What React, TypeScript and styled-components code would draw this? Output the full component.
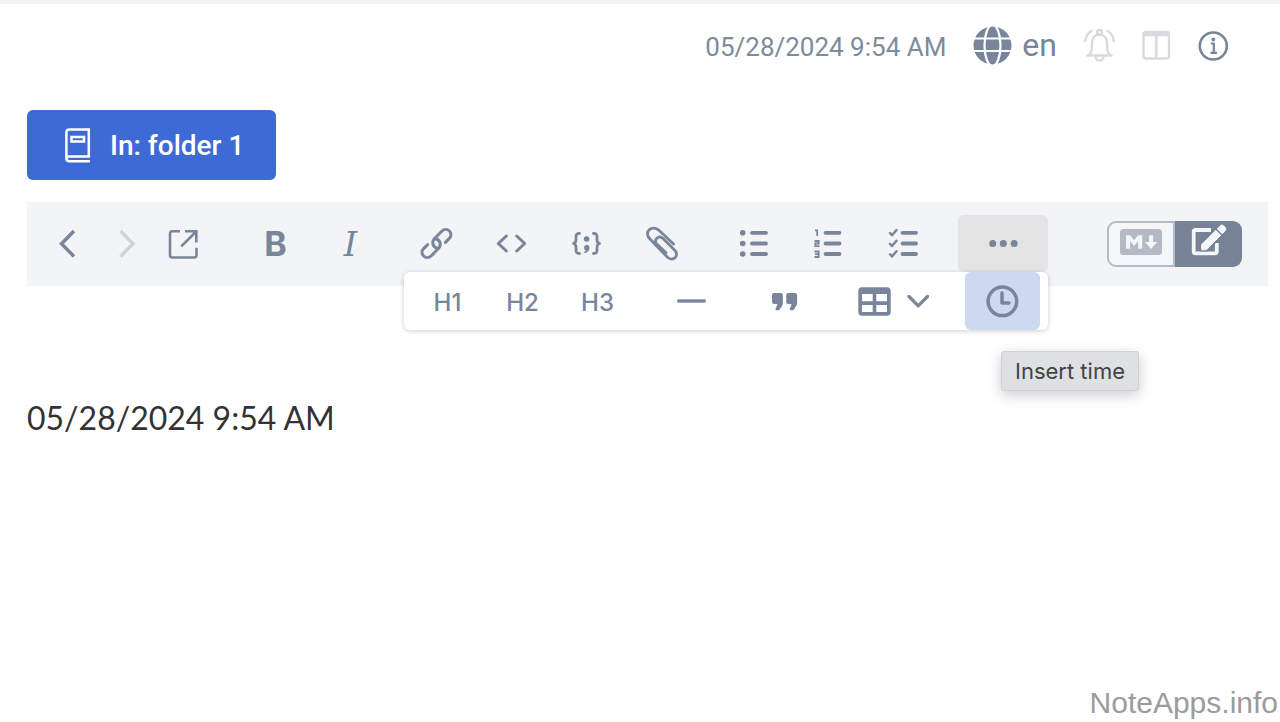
import React from "react";
import styled, { createGlobalStyle } from "styled-components";
import { FaMarkdown } from "react-icons/fa";

const slate = "#78859a";
const slateFill = "#768296";

const GlobalStyle = createGlobalStyle`
  *, *::before, *::after { box-sizing: border-box; }
  body { margin: 0; background: #fff; font-family: Roboto, sans-serif; color: ${slate}; }
  button { font: inherit; color: inherit; border: 0; padding: 0; background: none; cursor: pointer; }
  svg { display: block; flex: none; }
`;

const Page = styled.div`
  display: flex;
  flex-direction: column;
  min-height: 100vh;
  border-top: 4px solid #f1f2f4;
`;

const Header = styled.header`
  display: flex;
  align-items: center;
  justify-content: flex-end;
  gap: 27px;
  height: 82px;
  padding-right: 51px;
`;

const Clock = styled.time`
  padding-top: 3px;
  font-size: 26px;
  line-height: 32px;
  color: #7f8a9c;
`;

const HeaderButton = styled.button<{ $muted?: boolean }>`
  display: flex;
  align-items: center;
  gap: 10px;
  font-size: 32px;
  line-height: 40px;
  color: ${(p) => (p.$muted ? "#d8dade" : slate)};
`;

const Main = styled.main`
  display: flex;
  flex-direction: column;
  align-items: stretch;
  padding: 24px 12px 0 27px;
`;

const FolderButton = styled.button`
  display: flex;
  align-items: center;
  align-self: flex-start;
  gap: 19px;
  height: 70px;
  padding: 0 32px 0 37px;
  border-radius: 6px;
  background: #3e6ad5;
  color: #fff;
  font-size: 28px;
  font-weight: 500;
`;

const Toolbar = styled.div`
  display: flex;
  align-items: flex-start;
  height: 84px;
  margin-top: 22px;
  padding: 13px 26px 0 12px;
  background: #f2f4f6;
`;

const Group = styled.div<{ $gap?: number; $before?: number }>`
  display: flex;
  gap: ${(p) => p.$gap ?? 0}px;
  margin-left: ${(p) => p.$before ?? 0}px;
`;

const Tool = styled.button<{ $width?: number; $faded?: boolean }>`
  display: flex;
  align-items: center;
  justify-content: center;
  width: ${(p) => p.$width ?? 75}px;
  height: 57px;
  border-radius: 6px;
  color: ${(p) => (p.$faded ? "#cfd3d9" : slate)};
`;

const BoldMark = styled.span`
  font: 700 34px/40px Inter, sans-serif;
`;

const ItalicMark = styled.span`
  font: italic 400 34px/40px "DejaVu Serif", serif;
`;

const Anchor = styled.div`
  position: relative;
`;

const MoreButton = styled(Tool)`
  background: #e4e4e4;
`;

const Popup = styled.div`
  position: absolute;
  z-index: 1;
  top: 100%;
  right: 0;
  display: flex;
  gap: 18px;
  height: 58px;
  padding: 0 8px 0 6px;
  border-radius: 6px;
  background: #fff;
  box-shadow: 0 1px 5px rgba(0, 0, 0, 0.2);
`;

const PopupTool = styled.button<{ $active?: boolean; $width?: number }>`
  display: flex;
  align-items: center;
  justify-content: center;
  gap: 16px;
  width: ${(p) => p.$width ?? 75}px;
  height: 58px;
  padding-bottom: 1px;
  border-radius: 6px;
  background: ${(p) => (p.$active ? "#cdd9ef" : "transparent")};
`;

const Heading = styled.span`
  padding-top: 4px;
  font: 500 24px/32px Inter, sans-serif;
`;

const Tooltip = styled.div`
  position: absolute;
  top: 79px;
  left: 36px;
  height: 40px;
  padding: 0 13px;
  border: 1px solid #cfd1d4;
  border-radius: 3px;
  background: #dfe0e2;
  box-shadow: 0 4px 14px rgba(0, 0, 0, 0.2);
  color: #434345;
  font: 400 22px/38px Inter, sans-serif;
  white-space: nowrap;
`;

const Modes = styled.div`
  display: flex;
  height: 46px;
  margin-top: 6px;
  margin-left: auto;
`;

const Mode = styled.button<{ $on?: boolean }>`
  display: flex;
  align-items: center;
  justify-content: center;
  width: ${(p) => (p.$on ? 67 : 68)}px;
  padding-bottom: ${(p) => (p.$on ? 8 : 4)}px;
  border: ${(p) => (p.$on ? "0" : "2px solid #b4bac5")};
  border-radius: ${(p) => (p.$on ? "0 9px 9px 0" : "9px 0 0 9px")};
  background: ${(p) => (p.$on ? slateFill : "#f4f6f8")};
  color: ${(p) => (p.$on ? "#f4f6f8" : "#b4bac5")};
`;

const Editor = styled.div`
  margin-top: 108px;
  outline: none;
  color: #333;
  font: 400 32px/48px Lato, sans-serif;
`;

const Footer = styled.footer`
  margin-top: auto;
  padding: 0 2px 1px 0;
  text-align: right;
  color: #9b9b9b;
  font: 400 30px/36px "Liberation Sans", sans-serif;
`;

type GlyphProps = {
  width?: number;
  height?: number;
  stroke?: number;
  children: React.ReactNode;
};

function Glyph({ width = 39, height = 39, stroke = 3, children }: GlyphProps) {
  return (
    <svg
      width={width}
      height={height}
      viewBox={`0 0 ${width} ${height}`}
      fill="none"
      stroke="currentColor"
      strokeWidth={stroke}
      strokeLinecap="round"
      strokeLinejoin="round"
      aria-hidden="true"
    >
      {children}
    </svg>
  );
}

const Globe = () => (
  <Glyph stroke={2.2}>
    <circle cx="19.5" cy="19.5" r="19" fill="currentColor" stroke="none" />
    <path d="M0 12.5h39M0 25h39" stroke="#fff" />
    <ellipse cx="19.5" cy="19.5" rx="8" ry="20.500" stroke="#fff" />
  </Glyph>
);

const Bell = () => (
  <Glyph width={31} height={34} stroke={2.4}>
    <path d="M3.500 27.500h24M5 27c3-3 3-6 3-12 0-5 3-8.500 7.500-8.500s7.500 3.500 7.500 8.500c0 6 0 9 3 12" />
    <circle cx="15.500" cy="4.500" r="2.500" />
    <path d="M11.500 28.500c.5 5.500 7.500 5.500 8 0M7.500 3C3.500 5 1.700 8.500 1.300 13M23.500 3c4 2 5.800 5.500 6.200 10" />
  </Glyph>
);

const Columns = () => (
  <Glyph width={29} height={30} stroke={2.4}>
    <rect x="1.500" y="2" width="25.500" height="26.500" rx="2.500" />
    <path d="M14.300 4v24" />
    <path d="M2.500 4h23.500" strokeWidth="4.500" />
  </Glyph>
);

const Info = () => (
  <Glyph width={31} height={31} stroke={2.6}>
    <circle cx="15.300" cy="16" r="13.500" />
    <path d="M12.800 13.500h3v8.500M12.500 22.800h6.500" strokeWidth="2.200" strokeLinecap="butt" strokeLinejoin="miter" />
    <circle cx="15.300" cy="9.500" r="1.900" fill="currentColor" stroke="none" />
  </Glyph>
);

const Book = () => (
  <Glyph width={27} height={37} stroke={2.5}>
    <g strokeLinecap="butt" strokeLinejoin="miter">
      <path d="M2.400 31V5.500q0-3 3-3h19.400v27H5.200q-2.800 0-2.800 2.300T5.200 34.200h20.700" />
      <path d="M7.500 10h12.500v4.500h-12.500z" />
    </g>
  </Glyph>
);

const Back = () => <Glyph stroke={3.4}><path d="M26 7 13.500 19.700 26 32.500" strokeLinecap="butt" strokeLinejoin="miter" /></Glyph>;
const Forward = () => <Glyph stroke={3.4}><path d="M14.500 7 27 19.700 14.500 32.500" strokeLinecap="butt" strokeLinejoin="miter" /></Glyph>;

const External = () => (
  <Glyph stroke={2.6}>
    <g strokeLinecap="butt" strokeLinejoin="miter">
      <path d="M16 7.300H8.500Q6 7.300 6 9.800v21.200q0 2.500 2.500 2.500H30q2.500 0 2.500-2.500v-7.200" />
      <path d="M21 7.300h11.300v11.200M31.700 8 17.300 22.300" />
    </g>
  </Glyph>
);

const Link = () => (
  <Glyph stroke={3}>
    <path d="M19.700 24C15.500 22.500 14.500 18 17.300 14.700L25 7a5.200 5.200 0 0 1 7.400 7.400l-4 4" />
    <path d="M19.300 15C23.500 16.500 24.500 21 21.700 24.300L14 32a5.200 5.200 0 0 1-7.400-7.400l4-4" />
  </Glyph>
);

const Code = () => <Glyph stroke={3}><path d="M14.300 12 6.300 19.500l8 7.500M24.700 12l8 7.500-8 7.500" /></Glyph>;

const Braces = () => (
  <Glyph stroke={2.8}>
    <path d="M12.500 9.500c-3 0-3.500 1-3.500 3.500v2.500c0 2.500-.5 3.500-2.500 4 2 .5 2.500 1.500 2.500 4V26c0 2.500.5 3.500 3.500 3.500" />
    <path d="M26.500 9.500c3 0 3.500 1 3.500 3.500v2.500c0 2.500.5 3.500 2.500 4-2 .5-2.500 1.500-2.500 4V26c0 2.500-.5 3.500-3.500 3.500" />
    <circle cx="19.600" cy="15" r="2.800" fill="currentColor" stroke="none" />
    <path d="M19.600 20.800a2.900 2.900 0 0 1 2.900 2.900c0 2.600-1.900 4.700-4.900 5.500l-.6-1.300c1.200-.5 1.700-1 1.900-1.500A2.900 2.900 0 0 1 19.600 20.800z" fill="currentColor" stroke="none" />
  </Glyph>
);

const Clip = () => (
  <Glyph stroke={2.8}>
    <path d="M31.500 20 17.500 6.700C10 0 1.500 8 7.500 14.500l18 18.800C31 38.300 37.500 31.500 33 26.500L21 14.500C16.500 10.500 11 16 14.800 20l9.200 8.800" />
  </Glyph>
);

const Bullets = () => (
  <Glyph stroke={3.8}>
    <g fill="currentColor" stroke="none">
      <circle cx="8.700" cy="8.800" r="2.800" />
      <circle cx="8.700" cy="19.500" r="2.800" />
      <circle cx="8.700" cy="30" r="2.800" />
    </g>
    <path d="M18 8.800h14M18 19.500h14M18 30h14" />
  </Glyph>
);

const Numbers = () => (
  <Glyph stroke={3.8}>
    <path d="M16.500 8.800h14M16.500 19.500h14M16.500 30h14" />
    <g strokeWidth="1.800" strokeLinecap="butt" strokeLinejoin="miter">
      <path d="M6 6.300h2.200V12" />
      <path d="M5.500 17h4.200v2.500H6.300v2.700H10.500" />
      <path d="M5.500 27.500h4.200v5.500H5.500M6 30.200h3.500" />
    </g>
  </Glyph>
);

const Tasks = () => (
  <Glyph stroke={3.8}>
    <path d="M18.500 8.800h13.500M18.500 19.500h13.500M18.500 30h13.500" />
    <path d="m6 9 2 2.300L12.500 6M6 19.700l2 2.300 4.500-5.300M6 30.200l2 2.300 4.500-5.300" strokeWidth="2.400" />
  </Glyph>
);

const Dots = () => (
  <Glyph width={30} height={9}>
    <g fill="currentColor" stroke="none">
      <circle cx="4.700" cy="4.500" r="3.500" />
      <circle cx="15.300" cy="4.500" r="3.500" />
      <circle cx="26.200" cy="4.500" r="3.500" />
    </g>
  </Glyph>
);

const Rule = () => <Glyph stroke={3.3}><path d="M6.300 20h28.400" strokeLinecap="butt" /></Glyph>;

const Quote = () => (
  <Glyph>
    <g fill="currentColor" stroke="none">
      <path d="M8 14.200Q8 12 10.200 12h6.500q2.200 0 2.200 2.200V21.500q0 2-1 3.500l-1.800 3q-.7 1.200-2 1.200H12.500q-1.500 0-.9-1.400L13.500 23H10.200Q8 23 8 20.800z" />
      <path d="M22.200 14.200Q22.200 12 24.400 12h6.500q2.200 0 2.200 2.200V21.500q0 2-1 3.500l-1.800 3q-.7 1.200-2 1.200H26.700q-1.500 0-.9-1.400L27.700 23H24.400Q22.200 23 22.200 20.800z" />
    </g>
  </Glyph>
);

const Table = () => (
  <Glyph width={33}>
    <path
      fill="currentColor"
      fillRule="evenodd"
      stroke="none"
      d="M4 6.300h25q3.700 0 3.700 3.700v21q0 3.700-3.700 3.700H4Q.3 34.700.3 31V10Q.3 6.300 4 6.300zM4 13v7.300h10.700V13zM18.300 13v7.300H29V13zM4 24v7h10.700v-7zM18.300 24v7H29v-7z"
    />
  </Glyph>
);

const ChevronDown = () => <Glyph width={22} stroke={3.2}><path d="M2 15.500 11.200 24.800 20.500 15.500" /></Glyph>;

const TimeGlyph = () => (
  <Glyph stroke={3.5}>
    <circle cx="19.400" cy="20.300" r="14.300" />
    <path d="M19 12v10h7" />
  </Glyph>
);

const Compose = () => (
  <Glyph width={36} height={34} stroke={3.8}>
    <path d="M20 7H4.500Q2.700 7 2.700 8.800v19.700q0 1.800 1.800 1.800H24q1.800 0 1.800-1.800V20" strokeLinecap="butt" />
    <path
      d="M10.700 26.500V21.500L29.500 2.700q1.500-1.500 3 0l1.800 1.800q1.500 1.500 0 3L15.700 26.500z"
      fill="currentColor"
      stroke={slateFill}
      strokeWidth="4"
    />
    <path
      d="M10.700 26.500V21.500L29.500 2.700q1.500-1.500 3 0l1.800 1.800q1.500 1.500 0 3L15.700 26.500z"
      fill="currentColor"
      strokeWidth="1"
    />
    <path d="m24.500 5.500 7.200 7.200" stroke={slateFill} strokeWidth="1.500" />
  </Glyph>
);

const lists = [
  { label: "Bulleted list", glyph: <Bullets /> },
  { label: "Numbered list", glyph: <Numbers /> },
  { label: "Task list", glyph: <Tasks /> },
];

const inserts = [
  { label: "Link", glyph: <Link /> },
  { label: "Inline code", glyph: <Code /> },
  { label: "Code block", glyph: <Braces /> },
  { label: "Attachment", glyph: <Clip /> },
];

export default function App() {
  return (
    <Page>
      <GlobalStyle />
      <Header>
        <Clock dateTime="2024-05-28T09:54">05/28/2024 9:54 AM</Clock>
        <HeaderButton><Globe />en</HeaderButton>
        <HeaderButton $muted aria-label="Notifications"><Bell /></HeaderButton>
        <HeaderButton $muted aria-label="Split view"><Columns /></HeaderButton>
        <HeaderButton aria-label="Information"><Info /></HeaderButton>
      </Header>
      <Main>
        <FolderButton><Book />In: folder 1</FolderButton>
        <Toolbar role="toolbar" aria-label="Formatting">
          <Group $gap={1}>
            <Tool $width={57} aria-label="Back"><Back /></Tool>
            <Tool $width={57} $faded aria-label="Forward"><Forward /></Tool>
            <Tool $width={57} aria-label="Open in new window"><External /></Tool>
          </Group>
          <Group $before={26}>
            <Tool aria-label="Bold"><BoldMark>B</BoldMark></Tool>
            <Tool aria-label="Italic"><ItalicMark>I</ItalicMark></Tool>
          </Group>
          <Group $before={11}>
            {inserts.map((t) => <Tool key={t.label} aria-label={t.label}>{t.glyph}</Tool>)}
          </Group>
          <Group $before={17}>
            {lists.map((t) => <Tool key={t.label} aria-label={t.label}>{t.glyph}</Tool>)}
          </Group>
          <Group $before={17}>
            <Anchor>
              <MoreButton $width={90} aria-label="More" aria-expanded="true"><Dots /></MoreButton>
              <Popup>
                <Group>
                  {["H1", "H2", "H3"].map((h) => (
                    <PopupTool key={h}><Heading>{h}</Heading></PopupTool>
                  ))}
                </Group>
                <PopupTool aria-label="Horizontal rule"><Rule /></PopupTool>
                <PopupTool aria-label="Quote"><Quote /></PopupTool>
                <PopupTool $width={108} aria-label="Table"><Table /><ChevronDown /></PopupTool>
                <Anchor>
                  <PopupTool $active aria-labelledby="time-tip"><TimeGlyph /></PopupTool>
                  <Tooltip role="tooltip" id="time-tip">Insert time</Tooltip>
                </Anchor>
              </Popup>
            </Anchor>
          </Group>
          <Modes>
            <Mode aria-label="Markdown" aria-pressed="false"><FaMarkdown size={42} /></Mode>
            <Mode $on aria-label="Visual editor" aria-pressed="true"><Compose /></Mode>
          </Modes>
        </Toolbar>
        <Editor role="textbox" aria-label="Note" contentEditable suppressContentEditableWarning>
          05/28/2024 9:54 AM
        </Editor>
      </Main>
      <Footer>NoteApps.info</Footer>
    </Page>
  );
}
